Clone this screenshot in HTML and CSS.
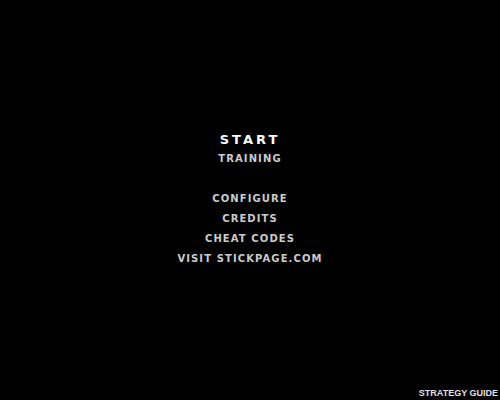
FILE: index.html
```html
<!DOCTYPE html>
<html lang="en">
<head>
  <meta charset="UTF-8" />
  <meta name="viewport" content="width=device-width, initial-scale=1.0"/>
  <title>Main Menu</title>
  <link rel="stylesheet" href="styles.css">
</head>
<body>

<div class="screen">
  <ul class="menu">
    <li class="item start">START</li>
    <li class="item">TRAINING</li>
    <li class="gap"></li>
    <li class="item">CONFIGURE</li>
    <li class="item">CREDITS</li>
    <li class="item">CHEAT CODES</li>
    <li class="item">VISIT STICKPAGE.COM</li>
  </ul>
  <div class="guide">STRATEGY GUIDE</div>
</div>

</body>
</html>
```

FILE: styles.css
```css
* { box-sizing: border-box; margin: 0; padding: 0; }

body, html {
  background-color: #000;
  overflow: hidden;
}

.screen {
  width: 500px;
  height: 400px;
  display: flex;
  flex-direction: column;
}

.menu {
  list-style: none;
  padding-top: 131px;
  display: flex;
  flex-direction: column;
  align-items: center;
  font-family: 'DejaVu Sans', sans-serif;
  font-weight: bold;
}

.item {
  height: 20px;
  line-height: 20px;
  font-size: 10px;
  letter-spacing: 1.1px;
  color: #cbcbcb;
  cursor: pointer;
}

.item.start {
  height: 18px;
  line-height: 18px;
  font-size: 13px;
  letter-spacing: 3px;
  color: #fff;
}

.gap { height: 20px; }

.guide {
  margin-top: auto;
  align-self: flex-end;
  padding: 0 2px 2px 0;
  font-family: 'Liberation Sans', Arial, sans-serif;
  font-weight: bold;
  font-size: 9px;
  line-height: 10px;
  color: #e0e0e0;
}
```
